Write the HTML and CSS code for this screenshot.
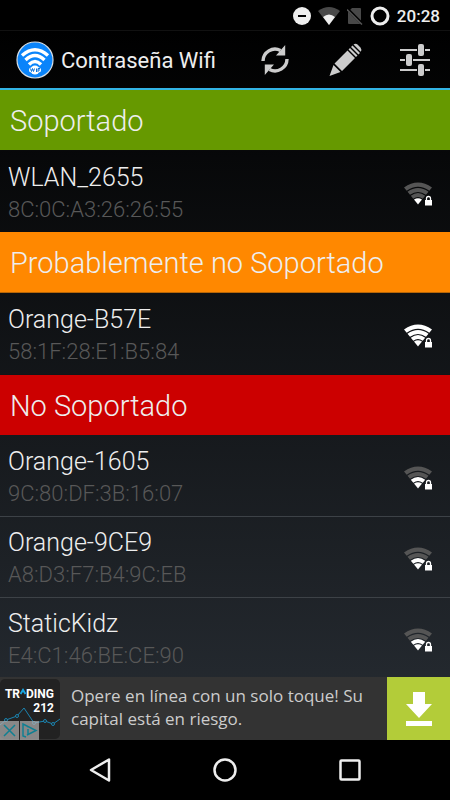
FILE: index.html
```
<!DOCTYPE html>
<html lang="es">
<head>
  <meta charset="UTF-8">
  <title>Contraseña Wifi</title>
  <meta name="viewport" content="width=device-width, initial-scale=1.0">
  <link rel="stylesheet" href="styles.css">
</head>
<body>
  <!-- shared wifi signal shapes -->
  <svg class="defs" width="0" height="0" aria-hidden="true">
    <defs>
      <path id="arc4" d="M0 5.5 Q14 -4.500 28 5.500 L25.300 8.800 Q14 .8 2.700 8.800Z"/>
      <path id="arc3" d="M3.500 9.700 Q14 2.200 24.500 9.700 L22 12.800 Q14 7 6 12.800Z"/>
      <path id="arc2" d="M6.800 13.700 Q14 8.500 21.200 13.700 L18.700 16.700 Q14 13.300 9.300 16.700Z"/>
      <path id="arc1" d="M10 17.600 Q14 14.800 18 17.600 L14 22.500Z"/>
      <g id="lock">
        <path fill="#fff" d="M21 18h7v5.500h-7z"/>
        <path fill="none" stroke="#fff" stroke-width="1.300" d="M22.500 18v-1.500a2 2 0 0 1 4 0V18"/>
      </g>
    </defs>
  </svg>

  <div class="screen">
    <div class="status-bar">
      <svg width="18" height="18" viewBox="0 0 18 18"><circle cx="9" cy="9" r="9" fill="#eee"/><path d="M5 9h8" stroke="#000" stroke-width="2"/></svg>
      <svg width="22" height="18" viewBox="0 0 22 18"><path fill="#484848" d="M0 4Q11-4 22 4L11 18z"/><path fill="#eee" d="M5 10Q11 5 17 10L11 18z"/></svg>
      <svg width="16" height="18" viewBox="0 0 16 18"><path fill="#484848" d="M5 1h8q1 0 1 1v14q0 1-1 1H2q-1 0-1-1V5z"/><path d="M0 1.500 15.500 17" stroke="#000" stroke-width="3"/><path d="M0 2.500 15 17.500" stroke="#555" stroke-width="1.500"/></svg>
      <svg width="20" height="20" viewBox="0 0 20 20"><circle cx="10" cy="10" r="8" fill="none" stroke="#eee" stroke-width="3"/></svg>
      <span class="clock">20:28</span>
    </div>

    <header class="action-bar">
      <svg class="logo" width="38" height="38" viewBox="0 0 38 38">
        <circle cx="19" cy="19" r="18" fill="#0a84fa" stroke="#d5dde5" stroke-width="1.200"/>
        <g fill="none" stroke="#fff" stroke-width="3.400">
          <path d="M6 14.500Q19 3 32 14.500"/>
          <path d="M9.500 19Q19 10 28.500 19"/>
          <path d="M13 23.500Q19 17.500 25 23.500"/>
        </g>
        <ellipse cx="19" cy="29" rx="4.500" ry="4.500" fill="#fff"/>
        <rect x="13" y="26.500" width="12" height="5" rx="2.500" fill="#fff"/>
        <path fill="none" stroke="#0a70d8" d="M14.500 27.500l1 3 1-3 1 3 1-3M20.500 27.500v3.500M22 31v-3.500h2M22 29h2"/>
      </svg>
      <h1>Contraseña Wifi</h1>
      <button aria-label="Actualizar">
        <svg width="32" height="32" viewBox="0 0 32 32">
          <path fill="none" stroke="#ccc" stroke-width="3.400" d="M4 17A12 12 0 0 1 21.500 6.500M28 15A12 12 0 0 1 10.500 25.500"/>
          <path fill="#ccc" d="M26.200 1v10.500H17zM5.800 31V20.500H15z"/>
        </svg>
      </button>
      <button aria-label="Editar">
        <svg width="34" height="34" viewBox="0 0 34 34">
          <path fill="#ccc" d="M1.500 33 5.500 22 12.500 29zM6.500 20.500 19.500 7.500 27 15 14 28zM20.500 6.500 22 5 29.500 12.500 28 14zM23 4 24.500 2.500 32 10 30.500 11.500zM25.500 1.500Q27.500 0 29.500 1.500L32.500 4.500Q34 6.500 32.700 8.700z"/>
        </svg>
      </button>
      <button aria-label="Ajustes">
        <svg width="32" height="32" viewBox="0 0 32 32">
          <path stroke="#ccc" stroke-width="2" d="M1 6h17M26 6h5M1 16h5M14 16h17M1 26h17M26 26h5"/>
          <g fill="#ccc"><rect x="19" y="0" width="6" height="12" rx="2"/><rect x="7" y="10" width="6" height="12" rx="2"/><rect x="19" y="20" width="6" height="12" rx="2"/></g>
        </svg>
      </button>
    </header>

    <main class="list">
      <h2 class="section ok">Soportado</h2>
      <div class="network">
        <div class="info"><div class="ssid">WLAN_2655</div><div class="mac">8C:0C:A3:26:26:55</div></div>
        <svg class="signal level-1" viewBox="0 0 28 24"><use href="#arc4"/><use href="#arc3"/><use href="#arc2"/><use href="#arc1"/><use href="#lock"/></svg>
      </div>

      <h2 class="section maybe">Probablemente no Soportado</h2>
      <div class="network">
        <div class="info"><div class="ssid">Orange-B57E</div><div class="mac">58:1F:28:E1:B5:84</div></div>
        <svg class="signal level-4" viewBox="0 0 28 24"><use href="#arc4"/><use href="#arc3"/><use href="#arc2"/><use href="#arc1"/><use href="#lock"/></svg>
      </div>

      <h2 class="section no">No Soportado</h2>
      <div class="network">
        <div class="info"><div class="ssid">Orange-1605</div><div class="mac">9C:80:DF:3B:16:07</div></div>
        <svg class="signal level-2" viewBox="0 0 28 24"><use href="#arc4"/><use href="#arc3"/><use href="#arc2"/><use href="#arc1"/><use href="#lock"/></svg>
      </div>
      <div class="network">
        <div class="info"><div class="ssid">Orange-9CE9</div><div class="mac">A8:D3:F7:B4:9C:EB</div></div>
        <svg class="signal level-2" viewBox="0 0 28 24"><use href="#arc4"/><use href="#arc3"/><use href="#arc2"/><use href="#arc1"/><use href="#lock"/></svg>
      </div>
      <div class="network">
        <div class="info"><div class="ssid">StaticKidz</div><div class="mac">E4:C1:46:BE:CE:90</div></div>
        <svg class="signal level-2" viewBox="0 0 28 24"><use href="#arc4"/><use href="#arc3"/><use href="#arc2"/><use href="#arc1"/><use href="#lock"/></svg>
      </div>
    </main>

    <div class="ad">
      <div class="ad-logo">
        <div class="brand">
          <span>TR</span>
          <svg width="6" height="14" viewBox="0 0 6 14"><path fill="none" stroke="#1ba6e0" stroke-width="2" d="M.5 7 3 3 5.500 7"/></svg>
          <span>DING</span>
        </div>
        <div class="brand">212</div>
        <svg class="chart" width="60" height="24" viewBox="0 0 60 24"><path fill="none" stroke="#1b84b0" d="M0 19 6 14 17 10 24 2 34 17 45 15 53 18 60 13"/><g fill="#222" stroke="#1b84b0"><circle cx="6" cy="14" r="1.500"/><circle cx="17" cy="10" r="1.500"/><circle cx="34" cy="17" r="1.500"/><circle cx="45" cy="15" r="1.500"/><circle cx="53" cy="18" r="1.500"/></g></svg>
        <div class="ad-choices">
          <button aria-label="Cerrar anuncio"><svg width="19" height="19" viewBox="0 0 19 19"><path stroke="#107f92" stroke-width="1.500" d="M4 4 15 15M15 4 4 15"/></svg></button>
          <button aria-label="Opciones de anuncios"><svg width="19" height="19" viewBox="0 0 19 19"><path fill="none" stroke="#107f92" stroke-width="1.500" d="M6 16 3 15V3L16 9.500 7 14M8 8v5M8 5.500v1"/></svg></button>
        </div>
      </div>
      <p>Opere en línea con un solo toque! Su capital está en riesgo.</p>
      <button class="download" aria-label="Descargar">
        <svg width="28" height="34" viewBox="0 0 28 34"><path fill="#fff" d="M8 0h12v12h7L14 26 1 12h7zM1 29h26v5H1z"/></svg>
      </button>
    </div>

    <nav class="nav-bar">
      <button aria-label="Atrás"><svg width="24" height="24" viewBox="0 0 24 24"><path d="M21 1.500v21L3 12z"/></svg></button>
      <button aria-label="Inicio"><svg width="24" height="24" viewBox="0 0 24 24"><circle cx="12" cy="12" r="10.500"/></svg></button>
      <button aria-label="Recientes"><svg width="24" height="24" viewBox="0 0 24 24"><rect x="2.500" y="2.500" width="19" height="19" rx="1"/></svg></button>
    </nav>
  </div>
</body>
</html>
```
FILE: styles.css
```
* {
  box-sizing: border-box;
}

body {
  margin: 0;
  background: #000;
  color: #eee;
  font-family: Roboto, sans-serif;
}

h1, h2, p {
  margin: 0;
}

button {
  display: flex;
  align-items: center;
  justify-content: center;
  padding: 0;
  border: 0;
  background: none;
  cursor: pointer;
}

svg {
  display: block;
  flex: none;
}

.defs {
  position: absolute;
}

.screen {
  display: flex;
  flex-direction: column;
  height: 100vh;
  background: linear-gradient(#000 30px, #2a3037);
}

.status-bar {
  display: flex;
  flex: none;
  align-items: center;
  justify-content: flex-end;
  gap: 7px;
  height: 30px;
  padding: 1px 10px 0 0;
  background: #000;
}

.clock {
  font-size: 17px;
  font-weight: 500;
}

.action-bar {
  display: flex;
  flex: none;
  align-items: center;
  height: 60px;
  padding-left: 16px;
  border-top: 1px solid #111;
  border-bottom: 2px solid #33b5e5;
}

.action-bar h1 {
  flex: 1;
  padding: 2px 0 0 7px;
  font-size: 22px;
  font-weight: 400;
  white-space: nowrap;
}

.action-bar button {
  width: 70px;
  height: 57px;
}

.list {
  flex: 1;
  min-height: 0;
  overflow: hidden;
}

.section {
  height: 61px;
  padding: 1px 10px 0;
  font-size: 29px;
  font-weight: 300;
  line-height: 60px;
}

.ok {
  background: #690;
  border-bottom: 1px solid #08090a;
}

.maybe {
  background: #f80;
  border-bottom: 1px solid #b66608;
}

.no {
  background: #c00;
  border-top: 1px solid #111417;
}

.network {
  display: flex;
  align-items: center;
  height: 81px;
  padding: 4px 18px 0 8px;
}

.network + .network {
  border-top: 1px solid #3d4247;
}

.info {
  flex: 1;
}

.ssid {
  font-size: 25px;
  font-weight: 300;
  line-height: 32px;
}

.mac {
  color: #585858;
  font-size: 22px;
  font-weight: 300;
  line-height: 32px;
}

.signal {
  width: 28px;
  height: 24px;
  fill: #fff;
}

.level-1 use:nth-child(-n+3),
.level-2 use:nth-child(-n+2) {
  fill: #555;
}

.ad {
  display: flex;
  flex: none;
  align-items: center;
  height: 63px;
  background: #333;
}

.ad-logo {
  position: relative;
  width: 60px;
  height: 60px;
  padding: 8px 6px 0 0;
  border-radius: 5px;
  background: #222;
}

.brand {
  display: flex;
  justify-content: flex-end;
  color: #fff;
  font-size: 12px;
  font-weight: 700;
  line-height: 14px;
}

.chart {
  position: absolute;
  left: 0;
  top: 27px;
}

.ad-choices {
  position: absolute;
  left: 0;
  bottom: -1px;
  display: flex;
  gap: 1px;
}

.ad-choices button {
  width: 19px;
  height: 19px;
  background: rgba(180, 180, 180, .7);
}

.ad p {
  flex: 1;
  padding: 0 0 4px 11px;
  color: #ccc;
  font-family: "Open Sans", sans-serif;
  font-size: 17px;
  font-weight: 400;
  line-height: 23px;
}

.download {
  width: 63px;
  height: 63px;
  background: #b3cc39;
}

.nav-bar {
  display: flex;
  flex: none;
  justify-content: center;
  gap: 61px;
  height: 60px;
  background: #000;
}

.nav-bar button {
  width: 64px;
}

.nav-bar svg {
  fill: none;
  stroke: #eee;
  stroke-width: 2.500;
  stroke-linejoin: round;
}
```
